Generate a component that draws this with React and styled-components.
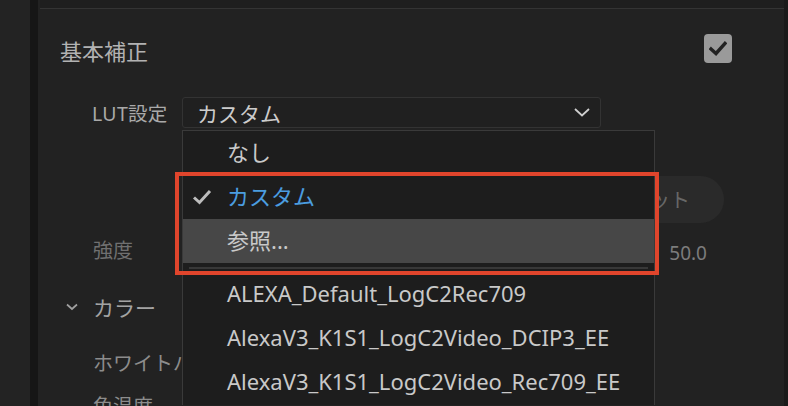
import React from 'react';
import styled, { createGlobalStyle } from 'styled-components';

const GlobalStyle = createGlobalStyle`
  html, body {
    margin: 0;
    padding: 0;
    background: #232323;
    overflow: hidden;
  }
  body {
    font-family: "Noto Sans", "Noto Sans CJK JP", sans-serif;
  }
`;

const Page = styled.div`
  display: flex;
  width: 788px;
  height: 406px;
  overflow: hidden;
  background: #232323;
`;

const Gutter = styled.div`
  width: 30px;
  flex-shrink: 0;
  background: #232323;
`;

const Divider = styled.div`
  width: 8px;
  flex-shrink: 0;
  background: #161616;
`;

const Panel = styled.div`
  flex: 1;
  display: flex;
  flex-direction: column;
  background: #222222;
  border-right: 4px solid #1a1a1a;
`;

const TopBand = styled.div`
  height: 8px;
  flex-shrink: 0;
  background: #1f1f1f;
  border-bottom: 1px solid #343434;
  margin-left: 2px;
`;

const Content = styled.div`
  display: flex;
  flex-direction: column;
  padding: 0 52px 0 22px;
`;

const HeaderRow = styled.div`
  display: flex;
  align-items: center;
  justify-content: space-between;
  height: 30px;
  margin-top: 24px;
`;

const Title = styled.span`
  font-size: 22px;
  color: #b2b2b2;
  line-height: 30px;
  padding-top: 5px;
`;

const CheckBox = styled.div`
  width: 28px;
  height: 29px;
  border-radius: 4px;
  background: #9a9a9a;
  display: flex;
  align-items: center;
  justify-content: center;
`;

const LutRow = styled.div`
  display: flex;
  align-items: center;
  height: 31px;
  margin-top: 34px;
  padding-left: 32px;
`;

const FieldLabel = styled.span`
  width: 90px;
  font-size: 19.5px;
  letter-spacing: 0.3px;
  color: #a9a9a9;
`;

const SelectWrap = styled.div`
  position: relative;
  width: 419px;
  height: 31px;
`;

const SelectBox = styled.div`
  box-sizing: border-box;
  height: 100%;
  display: flex;
  align-items: center;
  justify-content: space-between;
  padding: 0 10px 0 14px;
  border: 1px solid #333333;
  border-radius: 3px;
  background: #202020;
  font-size: 21px;
  color: #cccccc;
`;

const Menu = styled.div`
  position: absolute;
  top: calc(100% + 2px);
  left: 0;
  width: 473px;
  box-sizing: border-box;
  border: 1px solid #3a3a3a;
  border-bottom: none;
  background: #1d1d1d;
  z-index: 2;
`;

const MenuItem = styled.div`
  position: relative;
  box-sizing: border-box;
  height: 44px;
  display: flex;
  align-items: center;
  padding: 0 0 4px 44px;
  font-size: 22px;
  color: ${p => (p.selected ? '#4b9de0' : '#c9c9c9')};
  background: ${p => (p.active ? '#474747' : 'transparent')};
  white-space: nowrap;
`;

const CheckMark = styled.svg`
  position: absolute;
  left: 9px;
  top: 50%;
  transform: translateY(-50%);
`;

const Separator = styled.div`
  height: 10px;
  display: flex;
  align-items: center;
  padding: 0 6px;

  &::after {
    content: '';
    flex: 1;
    height: 2px;
    background: #383838;
  }
`;

const Annotation = styled.div`
  position: absolute;
  top: 75px;
  left: -7px;
  width: 484px;
  height: 103px;
  box-sizing: border-box;
  border: 4px solid #e0452c;
  z-index: 3;
  pointer-events: none;
`;

const ButtonRow = styled.div`
  display: flex;
  justify-content: flex-end;
  margin-top: 48px;
  height: 47px;
`;

const PillButton = styled.div`
  display: flex;
  align-items: center;
  padding: 0 34px;
  margin-right: 8px;
  border-radius: 24px;
  background: #2a2a2a;
  font-size: 20px;
  color: #676767;
`;

const SliderRow = styled.div`
  display: flex;
  align-items: center;
  justify-content: space-between;
  height: 36px;
  margin-top: 8px;
  padding-left: 33px;
`;

const SubLabel = styled.span`
  font-size: 20px;
  color: ${p => (p.dim ? '#707070' : '#8c8c8c')};
`;

const Value = styled.span`
  font-size: 19px;
  color: #7c7c7c;
  margin-right: 25px;
  padding-top: 7px;
`;

const SectionRow = styled.div`
  display: flex;
  align-items: center;
  height: 36px;
  margin-top: ${p => p.gap || 0}px;
  padding-left: ${p => p.indent || 33}px;
  gap: 15px;
  font-size: 21px;
  color: #a3a3a3;
  white-space: nowrap;
`;

const Check = () => (
  <svg width="18" height="15" viewBox="0 0 18 15">
    <path d="M2 8 L7 12.5 L16 2.5" fill="none" stroke="#222" strokeWidth="3.4" strokeLinecap="square" />
  </svg>
);

const Chevron = () => (
  <svg width="16" height="9" viewBox="0 0 16 9">
    <path d="M1 1 L8 7.5 L15 1" fill="none" stroke="#cfcfcf" strokeWidth="1.8" />
  </svg>
);

const Caret = () => (
  <svg width="12" height="8" viewBox="0 0 12 8">
    <path d="M1 1.5 L6 6 L11 1.5" fill="none" stroke="#a0a0a0" strokeWidth="1.7" />
  </svg>
);

const items = [
  'ALEXA_Default_LogC2Rec709',
  'AlexaV3_K1S1_LogC2Video_DCIP3_EE',
  'AlexaV3_K1S1_LogC2Video_Rec709_EE',
];

export default function App() {
  return (
    <>
      <GlobalStyle />
      <Page>
        <Gutter />
        <Divider />
        <Panel>
          <TopBand />
          <Content>
            <HeaderRow>
              <Title>基本補正</Title>
              <CheckBox><Check /></CheckBox>
            </HeaderRow>

            <LutRow>
              <FieldLabel>LUT設定</FieldLabel>
              <SelectWrap>
                <SelectBox>
                  カスタム
                  <Chevron />
                </SelectBox>
                <Menu>
                  <MenuItem>なし</MenuItem>
                  <MenuItem selected>
                    <CheckMark width="20" height="16" viewBox="0 0 20 16">
                      <path d="M2 8.5 L7.5 13.5 L18 2" fill="none" stroke="#bdbdbd" strokeWidth="3" />
                    </CheckMark>
                    カスタム
                  </MenuItem>
                  <MenuItem active>参照...</MenuItem>
                  <Separator />
                  {items.map(name => (
                    <MenuItem key={name}>{name}</MenuItem>
                  ))}
                </Menu>
                <Annotation />
              </SelectWrap>
            </LutRow>

            <ButtonRow>
              <PillButton>リセット</PillButton>
            </ButtonRow>

            <SliderRow>
              <SubLabel dim>強度</SubLabel>
              <Value>50.0</Value>
            </SliderRow>

            <SectionRow gap={22} indent={6}>
              <Caret />
              カラー
            </SectionRow>
            <SectionRow gap={19}>
              <SubLabel>ホワイトバランス</SubLabel>
            </SectionRow>
            <SectionRow gap={7}>
              <SubLabel>色温度</SubLabel>
            </SectionRow>
          </Content>
        </Panel>
      </Page>
    </>
  );
}
